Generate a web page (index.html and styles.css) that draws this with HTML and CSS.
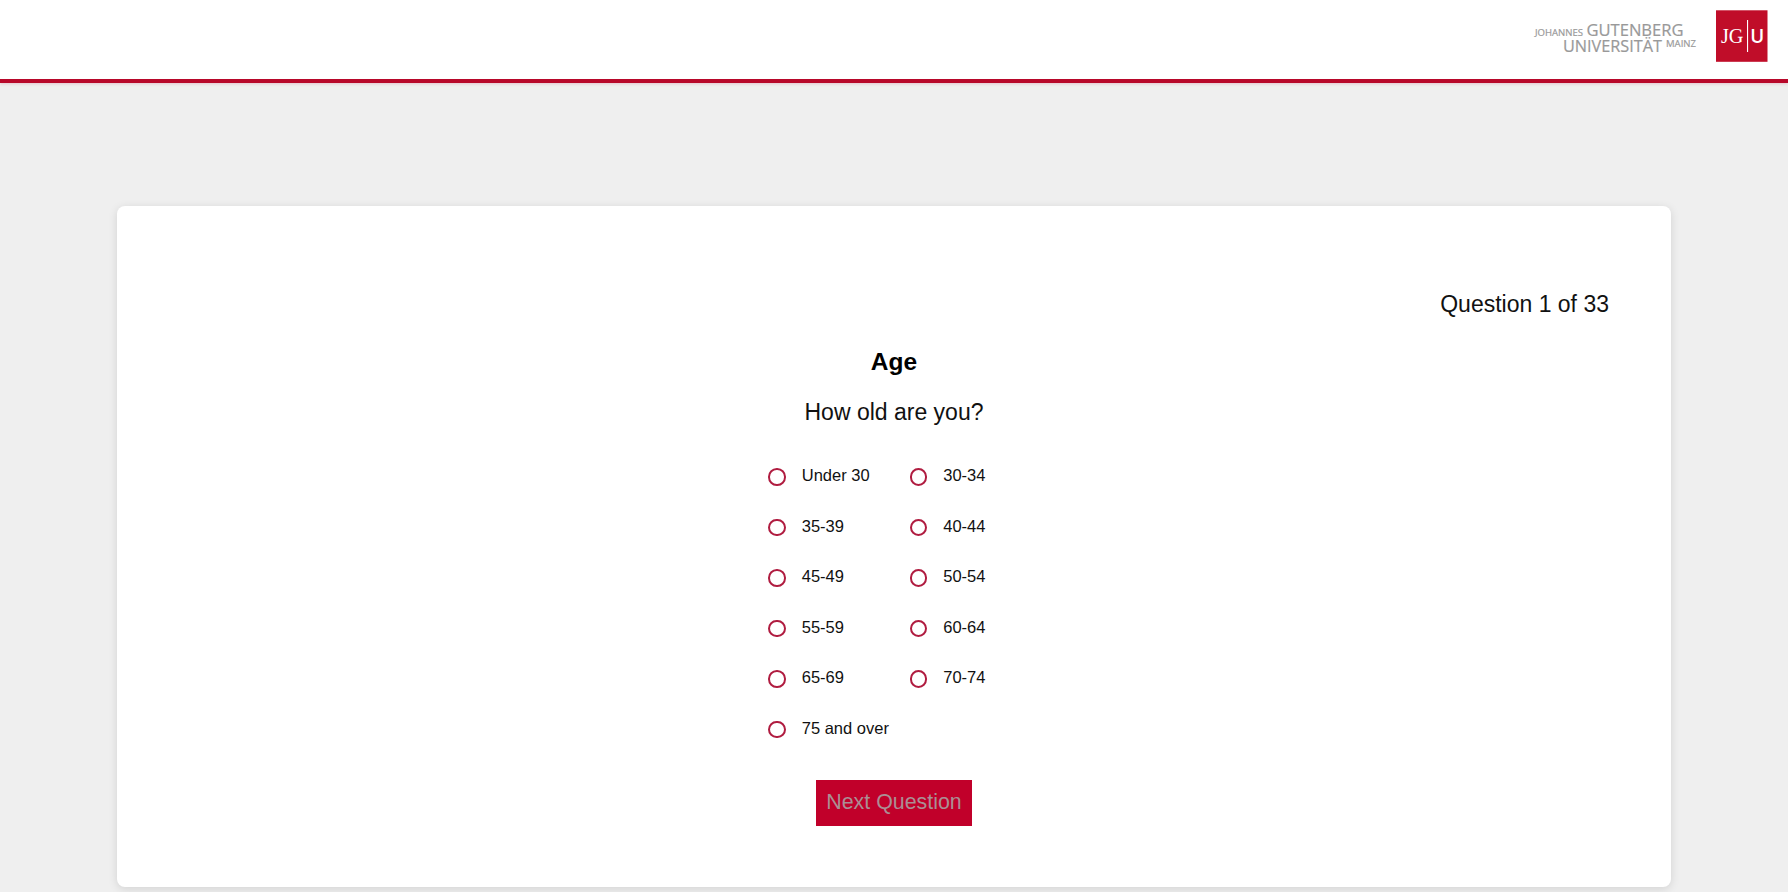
FILE: index.html
```html
<!DOCTYPE html>
<html lang="en">
<head>
<meta charset="utf-8">
<title>Questionnaire</title>
<link rel="stylesheet" href="styles.css">
</head>
<body>
<header class="header">
  <svg class="logo" width="248" height="60" viewBox="0 0 248 60" role="img" aria-label="Johannes Gutenberg Universität Mainz">
    <g class="wordmark">
      <text x="5" y="31" font-size="9.6" textLength="48" lengthAdjust="spacingAndGlyphs">JOHANNES</text>
      <text x="56.5" y="31" font-size="16.8" textLength="97" lengthAdjust="spacingAndGlyphs">GUTENBERG</text>
      <text x="33" y="46.8" font-size="16.8" textLength="99" lengthAdjust="spacingAndGlyphs">UNIVERSITÄT</text>
      <text x="136" y="42" font-size="9.6" textLength="30" lengthAdjust="spacingAndGlyphs">MAINZ</text>
    </g>
    <rect class="tile" x="186" y="5.3" width="51.5" height="51.5"/>
    <rect class="tile-mark" x="217" y="15" width="1.1" height="32"/>
    <text class="tile-mark serif" x="191" y="38" font-size="20.5" textLength="22.5" lengthAdjust="spacingAndGlyphs">JG</text>
    <text class="tile-mark sans" x="220.2" y="37.6" font-size="19" textLength="14" lengthAdjust="spacingAndGlyphs">U</text>
  </svg>
</header>
<main class="card">
  <p class="progress">Question 1 of 33</p>
  <h1 class="title">Age</h1>
  <p class="prompt">How old are you?</p>
  <form class="form">
    <div class="options">
      <label class="option"><input class="radio" type="radio" name="age">Under 30</label>
      <label class="option"><input class="radio" type="radio" name="age">30-34</label>
      <label class="option"><input class="radio" type="radio" name="age">35-39</label>
      <label class="option"><input class="radio" type="radio" name="age">40-44</label>
      <label class="option"><input class="radio" type="radio" name="age">45-49</label>
      <label class="option"><input class="radio" type="radio" name="age">50-54</label>
      <label class="option"><input class="radio" type="radio" name="age">55-59</label>
      <label class="option"><input class="radio" type="radio" name="age">60-64</label>
      <label class="option"><input class="radio" type="radio" name="age">65-69</label>
      <label class="option"><input class="radio" type="radio" name="age">70-74</label>
      <label class="option"><input class="radio" type="radio" name="age">75 and over</label>
    </div>
    <button class="next" type="button" disabled>Next Question</button>
  </form>
</main>
</body>
</html>
```
FILE: styles.css
```css
* { box-sizing: border-box; }
body {
  margin: 0;
  height: 892px;
  overflow: hidden;
  background: #efefef;
  color: #111;
  font-family: "Liberation Sans", Arial, sans-serif;
}
.header {
  display: flex;
  justify-content: flex-end;
  height: 82.5px;
  padding: 5px 10px 0 0;
  background: #fff;
  border-bottom: 4px solid #b8082a;
  box-shadow: 0 1px 3px rgba(184, 8, 42, .18);
}
.logo { display: block; }
.wordmark {
  fill: #999;
  stroke: #999;
  stroke-width: .2;
  font-family: "Open Sans", "Noto Sans", sans-serif;
}
.tile { fill: #c00d29; }
.tile-mark { fill: #fff; }
.serif { font-family: "Liberation Serif", serif; }
.sans { font-family: "Open Sans", sans-serif; font-weight: 600; }
.card {
  display: flex;
  flex-direction: column;
  align-items: center;
  width: 1554px;
  height: 681px;
  margin: 123.5px auto 0;
  padding: 83.5px 62px 0;
  background: #fff;
  border-radius: 8px;
  box-shadow: 0 2px 10px rgba(0, 0, 0, .12);
}
.progress, .title, .prompt {
  margin: 0;
  font-size: 23px;
  line-height: 28px;
}
.progress { align-self: flex-end; }
.title { margin-top: 30px; color: #000; font-size: 24.5px; }
.prompt { margin-top: 22px; }
.form { display: flex; flex-direction: column; align-items: center; }
.options {
  display: grid;
  grid-template-columns: 141.5px 94px;
  grid-auto-rows: 50.5px;
  margin: 25px 16px 0 0;
}
.option {
  display: flex;
  align-items: center;
  gap: 16px;
  font-size: 16.5px;
  white-space: nowrap;
}
.radio {
  appearance: none;
  flex: none;
  width: 17.5px;
  height: 17.5px;
  margin: 2.5px 0 0;
  border: 2px solid #b01c40;
  border-radius: 50%;
}
.next {
  width: 155.5px;
  height: 46px;
  margin-top: 26px;
  padding: 0;
  border: 0;
  background: #c1002a;
  color: #ab8e94;
  font: 21.4px "Liberation Sans", Arial, sans-serif;
}
```
